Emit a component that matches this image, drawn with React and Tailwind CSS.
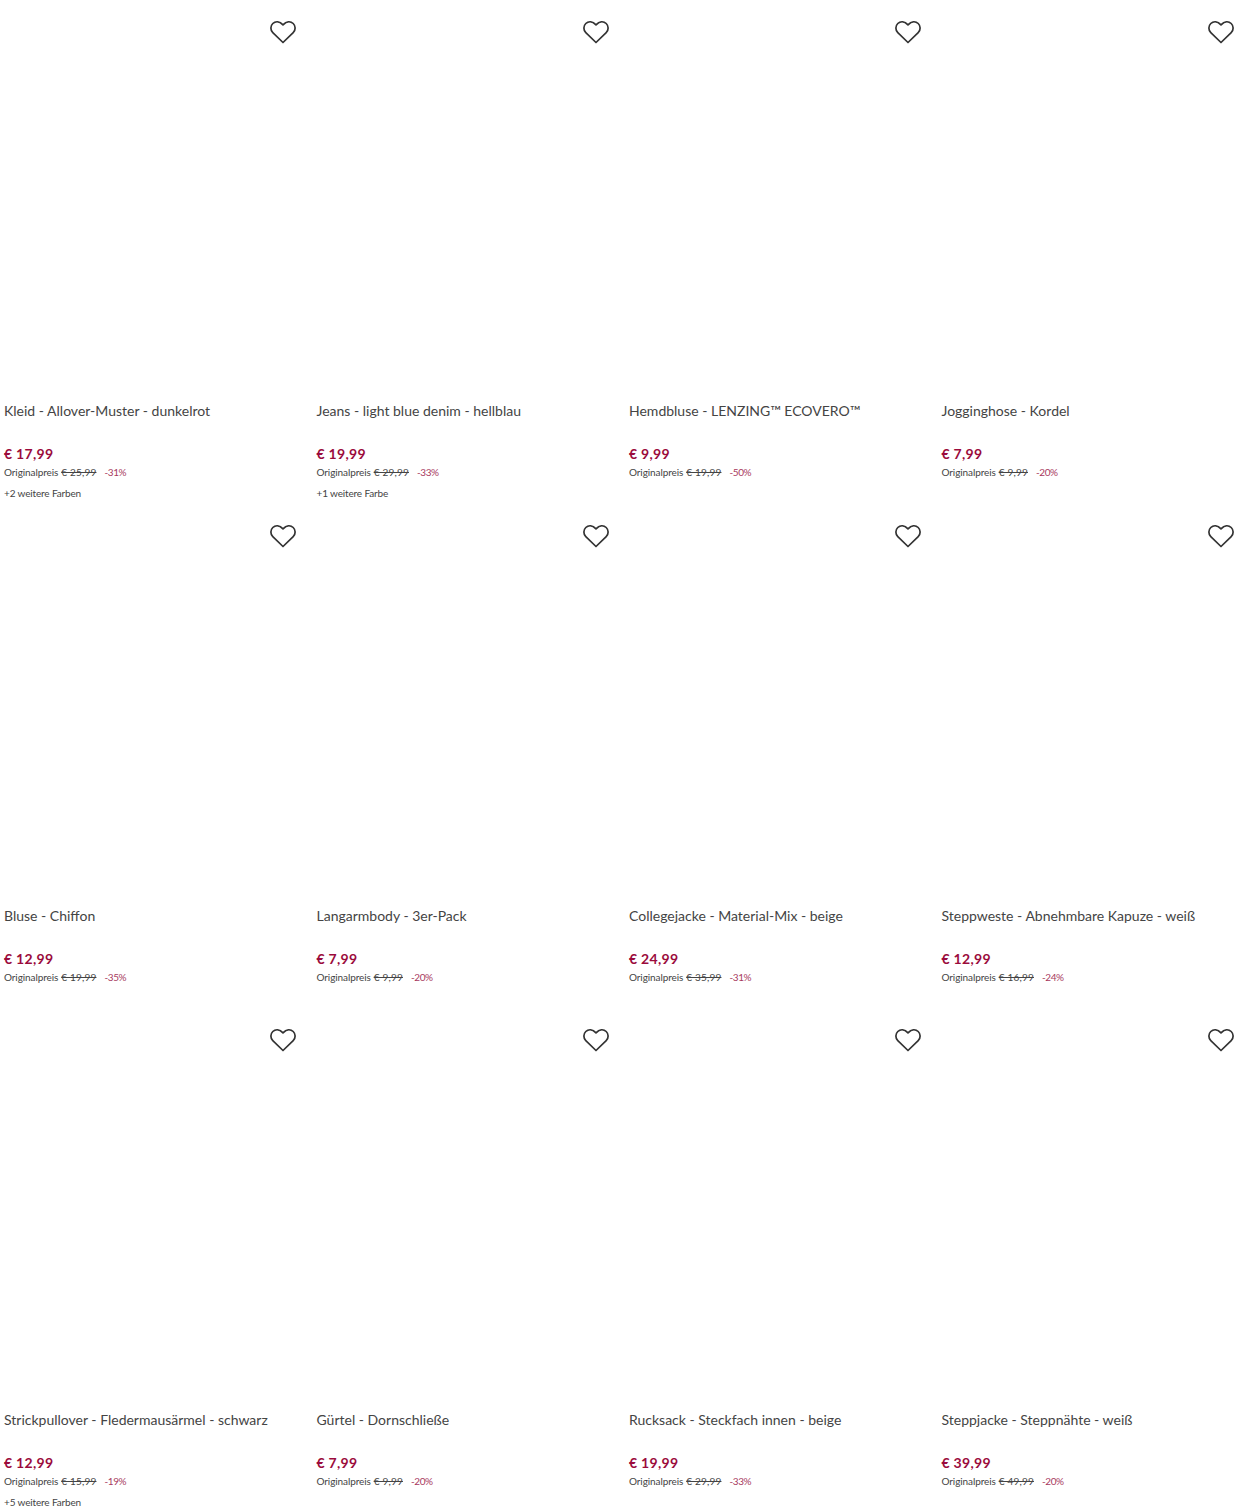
import React from 'react';

const products = [
  { title: 'Kleid - Allover-Muster - dunkelrot', price: '€ 17,99', old: '€ 25,99', off: '-31%', colors: '+2 weitere Farben' },
  { title: 'Jeans - light blue denim - hellblau', price: '€ 19,99', old: '€ 29,99', off: '-33%', colors: '+1 weitere Farbe' },
  { title: 'Hemdbluse - LENZING™ ECOVERO™', price: '€ 9,99', old: '€ 19,99', off: '-50%' },
  { title: 'Jogginghose - Kordel', price: '€ 7,99', old: '€ 9,99', off: '-20%' },
  { title: 'Bluse - Chiffon', price: '€ 12,99', old: '€ 19,99', off: '-35%' },
  { title: 'Langarmbody - 3er-Pack', price: '€ 7,99', old: '€ 9,99', off: '-20%' },
  { title: 'Collegejacke - Material-Mix - beige', price: '€ 24,99', old: '€ 35,99', off: '-31%' },
  { title: 'Steppweste - Abnehmbare Kapuze - weiß', price: '€ 12,99', old: '€ 16,99', off: '-24%' },
  { title: 'Strickpullover - Fledermausärmel - schwarz', price: '€ 12,99', old: '€ 15,99', off: '-19%', colors: '+5 weitere Farben' },
  { title: 'Gürtel - Dornschließe', price: '€ 7,99', old: '€ 9,99', off: '-20%' },
  { title: 'Rucksack - Steckfach innen - beige', price: '€ 19,99', old: '€ 29,99', off: '-33%' },
  { title: 'Steppjacke - Steppnähte - weiß', price: '€ 39,99', old: '€ 49,99', off: '-20%' },
];

const Heart = () => (
  <svg viewBox="0 0 26 24" className="w-[26px] h-[24px]" fill="none" stroke="#333333" strokeWidth="1.7" strokeLinejoin="round">
    <path d="M13 22.5 L2.8 12.6 C0.2 10 0.3 5.9 2.8 3.5 C5.5 1 9.6 1.2 13 4.8 C16.4 1.2 20.5 1 23.2 3.5 C25.7 5.9 25.8 10 23.2 12.6 Z" />
  </svg>
);

const ProductCard = ({ title, price, old, off, colors }) => (
  <div className="h-[504.2px] px-1 flex flex-col">
    <div className="h-[400.4px] flex justify-end items-start pt-5 pr-[12.5px]">
      <Heart />
    </div>
    <div className="text-[14px] leading-[22px] h-[22px] text-[#444444] whitespace-nowrap">{title}</div>
    <div className="mt-[21px] text-[14px] leading-[22px] font-bold text-[#9b0b3c] tracking-[0.3px]">{price}</div>
    <div className="flex items-center text-[10px] leading-[14px] text-[#444444]">
      <span className="tracking-[-0.1px]">Originalpreis</span>
      <span className="ml-[3px] line-through tracking-[0.2px]">{old}</span>
      <span className="ml-[8px] text-[#a83a60] tracking-[-0.4px]">{off}</span>
    </div>
    {colors && <div className="mt-[7px] text-[10px] leading-[14px] text-[#444444] tracking-[-0.15px]">{colors}</div>}
  </div>
);

const App = () => {
  return (
    <div className="w-[1250px] bg-white grid grid-cols-4 font-['Lato',sans-serif]">
      {products.map((p) => (
        <ProductCard key={p.title} {...p} />
      ))}
    </div>
  );
};

export default App;
